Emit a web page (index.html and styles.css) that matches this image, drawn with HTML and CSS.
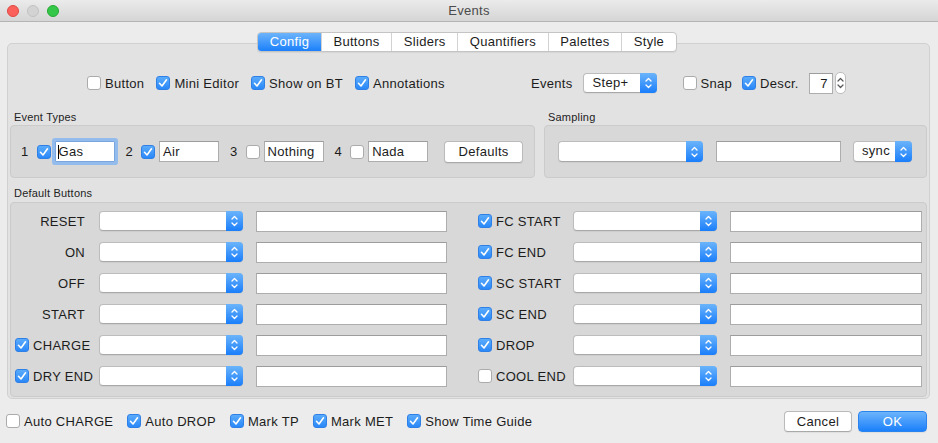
FILE: index.html
```html
<!DOCTYPE html>
<html>
<head>
<meta charset="utf-8">
<title>Events</title>
<link rel="stylesheet" href="styles.css">
</head>
<body>
<div class="titlebar">
  <div class="lights"><span class="light red"></span><span class="light gray"></span><span class="light green"></span></div>
  <div class="title">Events</div>
  <div></div>
</div>

<div class="tabs">
  <div class="tabgroup">
    <div class="tab active">Config</div>
    <div class="tab">Buttons</div>
    <div class="tab">Sliders</div>
    <div class="tab">Quantifiers</div>
    <div class="tab">Palettes</div>
    <div class="tab">Style</div>
  </div>
</div>

<div class="pane">
  <div class="toprow">
    <div class="topleft">
      <div class="chk"><span class="cb"></span>Button</div>
      <div class="chk"><span class="cb on"><svg viewBox="0 0 14 14"><path d="M3.5 7.3 6 10 10.5 3.8"/></svg></span>Mini Editor</div>
      <div class="chk"><span class="cb on"><svg viewBox="0 0 14 14"><path d="M3.5 7.3 6 10 10.5 3.8"/></svg></span>Show on BT</div>
      <div class="chk"><span class="cb on"><svg viewBox="0 0 14 14"><path d="M3.5 7.3 6 10 10.5 3.8"/></svg></span>Annotations</div>
    </div>
    <div class="topright">
      <span class="evlabel">Events</span>
      <div class="sel step"><span class="val">Step+</span><span class="arr"><svg viewBox="0 0 7 12"><path d="M1 4 3.5 1.5 6 4M1 8 3.5 10.5 6 8"/></svg></span></div>
      <div class="chk snap"><span class="cb"></span>Snap</div>
      <div class="chk descr"><span class="cb on"><svg viewBox="0 0 14 14"><path d="M3.5 7.3 6 10 10.5 3.8"/></svg></span>Descr.</div>
      <div class="tin spin">7</div>
      <div class="stepper"><svg viewBox="0 0 7 12"><path d="M1 4 3.5 1.5 6 4M1 8 3.5 10.5 6 8"/></svg></div>
    </div>
  </div>

  <div class="groups">
    <div class="group et">
      <div class="glabel">Event Types</div>
      <div class="gbox etbox">
        <span class="num">1</span>
        <span class="cb on"><svg viewBox="0 0 14 14"><path d="M3.5 7.3 6 10 10.5 3.8"/></svg></span>
        <div class="tin etin focus"><span class="caret"></span>Gas</div>
        <span class="num">2</span>
        <span class="cb on"><svg viewBox="0 0 14 14"><path d="M3.5 7.3 6 10 10.5 3.8"/></svg></span>
        <div class="tin etin">Air</div>
        <span class="num">3</span>
        <span class="cb"></span>
        <div class="tin etin">Nothing</div>
        <span class="num">4</span>
        <span class="cb"></span>
        <div class="tin etin">Nada</div>
        <div class="btn defaults">Defaults</div>
      </div>
    </div>
    <div class="group samp">
      <div class="glabel">Sampling</div>
      <div class="gbox sampbox">
        <div class="sel sampsel"><span class="val"></span><span class="arr"><svg viewBox="0 0 7 12"><path d="M1 4 3.5 1.5 6 4M1 8 3.5 10.5 6 8"/></svg></span></div>
        <div class="tin sampin"></div>
        <div class="sel sync"><span class="val">sync</span><span class="arr"><svg viewBox="0 0 7 12"><path d="M1 4 3.5 1.5 6 4M1 8 3.5 10.5 6 8"/></svg></span></div>
      </div>
    </div>
  </div>

  <div class="group db">
    <div class="glabel">Default Buttons</div>
    <div class="gbox dbgrid">
      <div class="lab">RESET</div>
      <div class="cell"><div class="sel rs"><span class="val"></span><span class="arr"><svg viewBox="0 0 7 12"><path d="M1 4 3.5 1.5 6 4M1 8 3.5 10.5 6 8"/></svg></span></div></div>
      <div class="cell"><div class="tin rin"></div></div>
      <div class="lab r"><div class="chk"><span class="cb on"><svg viewBox="0 0 14 14"><path d="M3.5 7.3 6 10 10.5 3.8"/></svg></span>FC START</div></div>
      <div class="cell"><div class="sel rs"><span class="val"></span><span class="arr"><svg viewBox="0 0 7 12"><path d="M1 4 3.5 1.5 6 4M1 8 3.5 10.5 6 8"/></svg></span></div></div>
      <div class="cell"><div class="tin rin"></div></div>

      <div class="lab">ON</div>
      <div class="cell"><div class="sel rs"><span class="val"></span><span class="arr"><svg viewBox="0 0 7 12"><path d="M1 4 3.5 1.5 6 4M1 8 3.5 10.5 6 8"/></svg></span></div></div>
      <div class="cell"><div class="tin rin"></div></div>
      <div class="lab r"><div class="chk"><span class="cb on"><svg viewBox="0 0 14 14"><path d="M3.5 7.3 6 10 10.5 3.8"/></svg></span>FC END</div></div>
      <div class="cell"><div class="sel rs"><span class="val"></span><span class="arr"><svg viewBox="0 0 7 12"><path d="M1 4 3.5 1.5 6 4M1 8 3.5 10.5 6 8"/></svg></span></div></div>
      <div class="cell"><div class="tin rin"></div></div>

      <div class="lab">OFF</div>
      <div class="cell"><div class="sel rs"><span class="val"></span><span class="arr"><svg viewBox="0 0 7 12"><path d="M1 4 3.5 1.5 6 4M1 8 3.5 10.5 6 8"/></svg></span></div></div>
      <div class="cell"><div class="tin rin"></div></div>
      <div class="lab r"><div class="chk"><span class="cb on"><svg viewBox="0 0 14 14"><path d="M3.5 7.3 6 10 10.5 3.8"/></svg></span>SC START</div></div>
      <div class="cell"><div class="sel rs"><span class="val"></span><span class="arr"><svg viewBox="0 0 7 12"><path d="M1 4 3.5 1.5 6 4M1 8 3.5 10.5 6 8"/></svg></span></div></div>
      <div class="cell"><div class="tin rin"></div></div>

      <div class="lab">START</div>
      <div class="cell"><div class="sel rs"><span class="val"></span><span class="arr"><svg viewBox="0 0 7 12"><path d="M1 4 3.5 1.5 6 4M1 8 3.5 10.5 6 8"/></svg></span></div></div>
      <div class="cell"><div class="tin rin"></div></div>
      <div class="lab r"><div class="chk"><span class="cb on"><svg viewBox="0 0 14 14"><path d="M3.5 7.3 6 10 10.5 3.8"/></svg></span>SC END</div></div>
      <div class="cell"><div class="sel rs"><span class="val"></span><span class="arr"><svg viewBox="0 0 7 12"><path d="M1 4 3.5 1.5 6 4M1 8 3.5 10.5 6 8"/></svg></span></div></div>
      <div class="cell"><div class="tin rin"></div></div>

      <div class="lab c"><div class="chk"><span class="cb on"><svg viewBox="0 0 14 14"><path d="M3.5 7.3 6 10 10.5 3.8"/></svg></span>CHARGE</div></div>
      <div class="cell"><div class="sel rs"><span class="val"></span><span class="arr"><svg viewBox="0 0 7 12"><path d="M1 4 3.5 1.5 6 4M1 8 3.5 10.5 6 8"/></svg></span></div></div>
      <div class="cell"><div class="tin rin"></div></div>
      <div class="lab r"><div class="chk"><span class="cb on"><svg viewBox="0 0 14 14"><path d="M3.5 7.3 6 10 10.5 3.8"/></svg></span>DROP</div></div>
      <div class="cell"><div class="sel rs"><span class="val"></span><span class="arr"><svg viewBox="0 0 7 12"><path d="M1 4 3.5 1.5 6 4M1 8 3.5 10.5 6 8"/></svg></span></div></div>
      <div class="cell"><div class="tin rin"></div></div>

      <div class="lab c"><div class="chk"><span class="cb on"><svg viewBox="0 0 14 14"><path d="M3.5 7.3 6 10 10.5 3.8"/></svg></span>DRY END</div></div>
      <div class="cell"><div class="sel rs"><span class="val"></span><span class="arr"><svg viewBox="0 0 7 12"><path d="M1 4 3.5 1.5 6 4M1 8 3.5 10.5 6 8"/></svg></span></div></div>
      <div class="cell"><div class="tin rin"></div></div>
      <div class="lab r"><div class="chk"><span class="cb"></span>COOL END</div></div>
      <div class="cell"><div class="sel rs"><span class="val"></span><span class="arr"><svg viewBox="0 0 7 12"><path d="M1 4 3.5 1.5 6 4M1 8 3.5 10.5 6 8"/></svg></span></div></div>
      <div class="cell"><div class="tin rin"></div></div>
    </div>
  </div>
</div>

<div class="bottom">
  <div class="chk"><span class="cb"></span>Auto CHARGE</div>
  <div class="chk"><span class="cb on"><svg viewBox="0 0 14 14"><path d="M3.5 7.3 6 10 10.5 3.8"/></svg></span>Auto DROP</div>
  <div class="chk"><span class="cb on"><svg viewBox="0 0 14 14"><path d="M3.5 7.3 6 10 10.5 3.8"/></svg></span>Mark TP</div>
  <div class="chk"><span class="cb on"><svg viewBox="0 0 14 14"><path d="M3.5 7.3 6 10 10.5 3.8"/></svg></span>Mark MET</div>
  <div class="chk"><span class="cb on"><svg viewBox="0 0 14 14"><path d="M3.5 7.3 6 10 10.5 3.8"/></svg></span>Show Time Guide</div>
  <div class="actions">
    <div class="btn cancel">Cancel</div>
    <div class="btn ok">OK</div>
  </div>
</div>
</body>
</html>
```

FILE: styles.css
```css
* { box-sizing: border-box; margin: 0; padding: 0; }
html, body { width: 938px; height: 443px; overflow: hidden; }
body {
  background: #ececec;
  font-family: "Liberation Sans", Arial, sans-serif;
  font-size: 13px;
  letter-spacing: 0.3px;
  color: #1c1c1c;
}

/* title bar */
.titlebar {
  height: 22px;
  border-bottom: 1px solid #b5b5b5;
  background: linear-gradient(#ebebeb, #d5d5d5);
  display: grid;
  grid-template-columns: 1fr auto 1fr;
  align-items: center;
}
.lights { display: flex; gap: 8px; padding-left: 7px; padding-top: 1px; }
.light { width: 12px; height: 12px; border-radius: 50%; }
.red { background: #fc605b; border: 1px solid #de4843; }
.gray { background: #d3d3d3; border: 1px solid #c2c2c2; }
.green { background: #34c748; border: 1px solid #26a934; }
.title { color: #4b4b4b; font-size: 13px; }

/* tabs */
.tabs {
  display: flex;
  justify-content: center;
  margin-top: 10px;
  margin-bottom: -9px;
  padding-right: 4px;
  position: relative;
  z-index: 1;
}
.tabgroup {
  display: flex;
  height: 20px;
  background: #fff;
  border: 1px solid #c4c4c4;
  border-radius: 4px;
  overflow: hidden;
  box-shadow: 0 1px 1px rgba(0,0,0,0.06);
}
.tab {
  padding: 0 11.6px;
  line-height: 18px;
  border-left: 1px solid #d2d2d2;
  color: #1c1c1c;
}
.tab:first-child { border-left: none; }
.tab.active {
  background: linear-gradient(#6cb4fb, #1b80fb);
  color: #fff;
}

/* pane */
.pane {
  margin: 0 8px 0 7px;
  height: 356px;
  border: 1px solid #d0d0d0;
  border-radius: 5px;
  background: #e2e2e2;
  padding: 0 2px;
}
.toprow { display: flex; align-items: center; height: 22px; margin-top: 28px; }
.topleft { width: 521px; padding-left: 77px; display: flex; align-items: center; gap: 12px; }
.topright { display: flex; align-items: center; }
.evlabel { margin-right: 10px; }
.step { width: 74px; height: 22px; margin-right: 26px; }
.step .val { line-height: 20px; }
.snap { margin-right: 10px; }
.descr { margin-right: 10px; }
.spin { width: 24px; height: 19px; text-align: right; padding-right: 4px; line-height: 17px; }
.stepper {
  width: 11px;
  height: 22px;
  margin-left: 2px;
  background: #fff;
  border: 1px solid #bdbdbd;
  border-radius: 5px;
  display: flex;
  align-items: center;
  justify-content: center;
}
.stepper svg { width: 7px; height: 12px; fill: none; stroke: #555; stroke-width: 1.2; stroke-linecap: round; stroke-linejoin: round; }

/* checkbox */
.chk { display: flex; align-items: center; gap: 4px; white-space: nowrap; }
.cb {
  width: 14px;
  height: 14px;
  flex: none;
  border-radius: 3px;
  background: #fff;
  border: 1px solid #ababab;
  display: flex;
  align-items: center;
  justify-content: center;
}
.cb.on {
  background: linear-gradient(#5aabfb, #2a88f8);
  border: 1px solid #2f80e6;
}
.cb svg { width: 14px; height: 14px; flex: none; }
.cb svg path { fill: none; stroke: #fff; stroke-width: 1.6; stroke-linecap: round; stroke-linejoin: round; }

/* inputs */
.tin {
  height: 21px;
  background: #fff;
  border: 1px solid #adadad;
  border-top-color: #9c9c9c;
  padding-left: 3px;
  line-height: 19px;
  white-space: nowrap;
}
.sel {
  display: flex;
  height: 20px;
  background: #fff;
  border: 1px solid #bcbcbc;
  border-bottom-color: #a8a8a8;
  border-radius: 4px;
  box-shadow: 0 1px 1px rgba(0,0,0,0.05);
}
.sel .val { flex: 1; padding-left: 9px; line-height: 18px; }
.sel .arr {
  width: 17px;
  margin: -1px -1px -1px 0;
  border-radius: 0 4px 4px 0;
  background: linear-gradient(#6bb4fb, #1a7efb);
  display: flex;
  align-items: center;
  justify-content: center;
}
.sel .arr svg { width: 7px; height: 12px; fill: none; stroke: #fff; stroke-width: 1.3; stroke-linecap: round; stroke-linejoin: round; }

.btn {
  background: #fff;
  border: 1px solid #bababa;
  border-bottom-color: #a9a9a9;
  border-radius: 4px;
  text-align: center;
  box-shadow: 0 1px 1px rgba(0,0,0,0.06);
}

/* groups */
.groups { display: flex; gap: 9px; margin-top: 16px; }
.et { width: 525px; }
.samp { width: 383px; }
.glabel { font-size: 11px; line-height: 14px; padding-left: 4px; margin-bottom: 1px; color: #222; letter-spacing: 0.2px; }
.gbox { background: #d8d8d8; border: 1px solid #cbcbcb; border-radius: 4px; }

.etbox { height: 53px; display: flex; align-items: center; padding-left: 10px; }
.num { margin-right: 8px; }
.etbox .cb { margin-right: 4px; }
.etin { width: 60px; margin-right: 11px; }
.focus {
  border-color: #7aa6e0;
  border-radius: 1px;
  box-shadow: 0 0 0 3px #93bbec;
  display: flex;
  align-items: center;
  padding-left: 2px;
}
.caret { width: 1px; height: 14px; background: #000; }
.defaults { width: 79px; height: 22px; line-height: 20px; margin-left: 5px; }

.sampbox { height: 53px; display: flex; align-items: center; padding-left: 13px; }
.sampsel { width: 145px; height: 21px; margin-right: 13px; }
.sampin { width: 125px; margin-right: 12px; }
.sync { width: 59px; height: 21px; }
.sync .val { padding-left: 8px; }

.db { margin-top: 8px; width: 917px; }
.db .glabel { margin-bottom: 2px; }
.dbgrid {
  height: 195px;
  display: grid;
  grid-template-columns: 84px 157px 191px 126px 157px 192px;
  grid-auto-rows: 22px;
  row-gap: 9px;
  padding: 7px 0 0 4px;
}
.lab { display: flex; align-items: center; justify-content: flex-end; padding-right: 14px; white-space: nowrap; }
.lab.c { justify-content: flex-start; padding-right: 0; }
.lab.r { justify-content: flex-start; padding-right: 0; padding-left: 31px; }
.cell { display: flex; align-items: center; }
.rs { width: 144px; }
.rin { width: 100%; }

/* bottom */
.bottom {
  display: flex;
  align-items: center;
  height: 22px;
  margin-top: 11px;
  padding: 0 11px 0 6px;
  gap: 14px;
}
.actions { margin-left: auto; display: flex; gap: 6px; }
.cancel { width: 68px; height: 21px; line-height: 19px; }
.ok {
  width: 69px;
  height: 21px;
  line-height: 19px;
  color: #fff;
  background: linear-gradient(#6cb4fb, #1b80fb);
  border-color: #2b84ee;
}
```
